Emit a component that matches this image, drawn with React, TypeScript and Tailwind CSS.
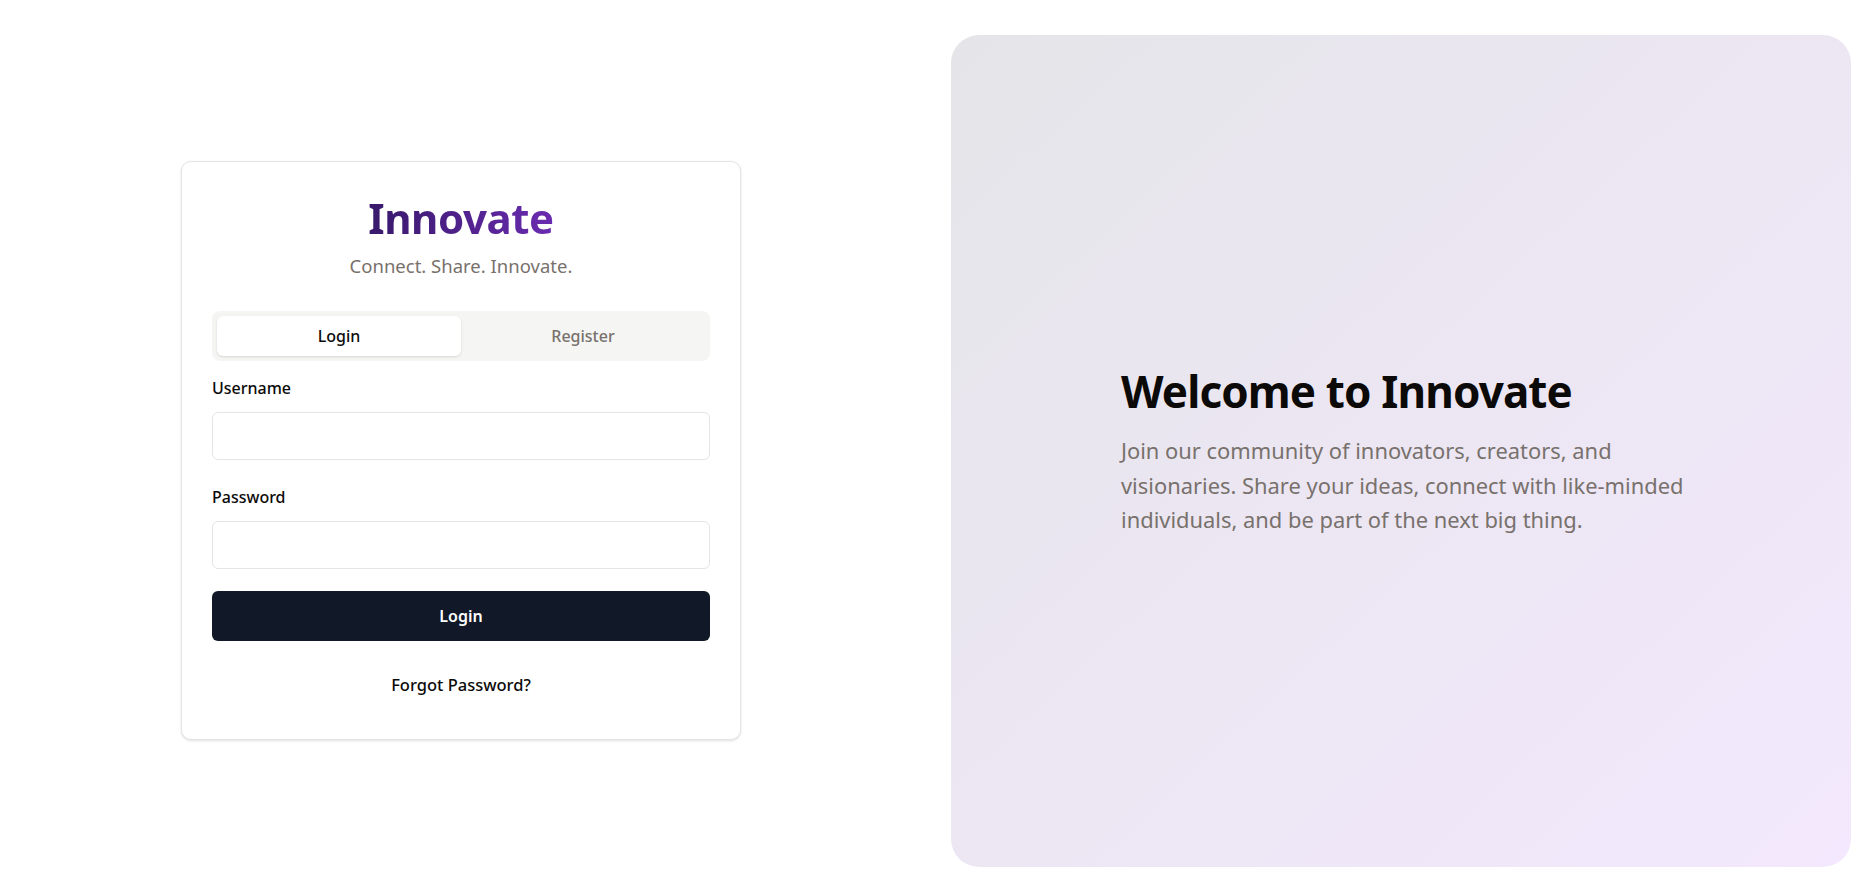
import React from "react";

export default function App() {
  return (
    <div
      className="flex h-[891px] w-[1865px] bg-white"
      style={{ fontFamily: "'Noto Sans', 'Open Sans', sans-serif" }}
    >
      <div className="flex w-[922px] items-start justify-center pt-[161px]">
        <div className="w-[560px] rounded-[10px] border border-[#e7e5e4] bg-white px-[30px] pb-[42px] pt-[35px] shadow-sm">
          <div className="text-center">
            <h1 className="inline-block bg-gradient-to-r from-[#38196a] to-[#6a2bb0] bg-clip-text text-[42px] font-bold leading-[42px] tracking-[-0.01em] text-transparent">
              Innovate
            </h1>
            <p className="mt-[12px] text-[18.5px] leading-[28px] text-[#78716c]">
              Connect. Share. Innovate.
            </p>
          </div>

          <div className="mt-[31px] flex h-[50px] rounded-lg bg-[#f5f5f4] p-[5px]">
            <button className="flex-1 rounded-md bg-white text-[16px] font-medium text-[#0c0a09] shadow-sm">
              Login
            </button>
            <button className="flex-1 rounded-md text-[16px] font-medium text-[#78716c]">
              Register
            </button>
          </div>

          <label className="mt-[15px] block text-[16px] font-medium leading-[24px] text-[#0c0a09]">
            Username
          </label>
          <input
            type="text"
            className="mt-[12px] block h-[48px] w-full rounded-md border border-[#e7e5e4] bg-white px-3 outline-none"
          />

          <label className="mt-[25px] block text-[16px] font-medium leading-[24px] text-[#0c0a09]">
            Password
          </label>
          <input
            type="password"
            className="mt-[12px] block h-[48px] w-full rounded-md border border-[#e7e5e4] bg-white px-3 outline-none"
          />

          <button className="mt-[22px] block h-[50px] w-full rounded-md bg-[#111827] text-[16px] font-semibold text-white">
            Login
          </button>

          <div className="mt-[32px] text-center text-[16.5px] font-medium leading-[24px] text-[#0c0a09]">
            Forgot Password?
          </div>
        </div>
      </div>

      <div className="ml-[29px] mt-[35px] flex h-[832px] w-[900px] items-center rounded-[28px] bg-gradient-to-br from-[#e5e5e9] to-[#f3e8fd] pl-[170px]">
        <div className="w-[585px] pt-[5px]">
          <h2 className="text-[44px] font-bold leading-[44px] tracking-[-0.02em] text-[#0c0a09]">
            Welcome to Innovate
          </h2>
          <p className="mt-[21px] text-[21.9px] leading-[34.5px] text-[#78716c]">
            Join our community of innovators, creators, and visionaries. Share
            your ideas, connect with like-minded individuals, and be part of the
            next big thing.
          </p>
        </div>
      </div>
    </div>
  );
}
